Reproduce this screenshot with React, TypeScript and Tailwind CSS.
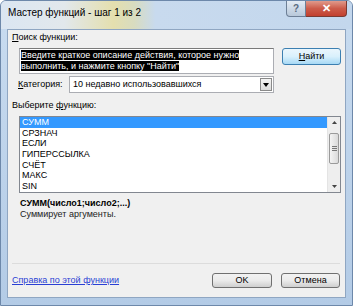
// Мастер функций (Excel, Windows 7 Aero dialog)

const functions = ['СУММ', 'СРЗНАЧ', 'ЕСЛИ', 'ГИПЕРССЫЛКА', 'СЧЁТ', 'МАКС', 'SIN']

function Btn({ label, w }: { label: React.ReactNode; w: string }) {
  return (
    <div
      className={`${w} h-[15px] flex items-center justify-center rounded-[3px] border border-[#707070] bg-gradient-to-b from-[#f2f2f2] via-[#ebebeb] to-[#cfcfcf] text-[9px] text-black leading-none`}
    >
      {label}
    </div>
  )
}

export default function App() {
  return (
    <div
      className="w-[353px] h-[306px] flex flex-col overflow-hidden rounded-t-[6px] border border-[#6d88aa] bg-gradient-to-b from-[#c9dcf0] to-[#b3cbe6]"
      style={{ fontFamily: '"Liberation Sans", Arial, sans-serif' }}
    >
      {/* Title bar */}
      <div className="h-[28px] flex items-start shrink-0 bg-[linear-gradient(to_right,#dbe6f2_0%,#e2e8ec_18%,#e4dfae_32%,#d8dcc0_38%,#c8daee_44%,#c3d7ed_100%)]">
        <div className="pl-[7px] pt-[6px] text-[10px] leading-[12px] text-black">
          Мастер функций - шаг 1 из 2
        </div>
        <div className="ml-auto mr-[5px] flex">
          <div className="w-[20px] h-[16px] flex items-center justify-center rounded-bl-[4px] border border-[#6d7f96] border-t-0 bg-gradient-to-b from-[#e3ebf4] to-[#b8c8da] text-[10px] font-bold text-[#5a6b80] leading-none">
            ?
          </div>
          <div className="w-[41px] h-[16px] flex items-center justify-center rounded-br-[4px] border border-[#7a3a32] border-t-0 border-l-0 bg-gradient-to-b from-[#e09a8c] via-[#cc5b4a] to-[#c2402e] text-[11px] font-bold text-white leading-none">
            ✕
          </div>
        </div>
      </div>

      {/* Client area */}
      <div className="mx-[6px] mb-[7px] h-[270px] flex flex-col bg-[#f0f0f0] border border-[#8fa6c2] text-black">
        <div className="pt-[2px] pl-[4px] text-[9px] leading-[11px]">
          <span className="underline">П</span>оиск функции:
        </div>

        {/* Search row */}
        <div className="mt-[5px] ml-[11px] flex items-start">
          <div className="w-[255px] h-[26px] bg-white border border-[#abadb3] border-t-[#7a7a7a] px-[1px] pt-[1px] text-[9px] leading-[11px]">
            <span className="bg-black text-white">
              Введите краткое описание действия, которое нужно
              <br />
              выполнить, и нажмите кнопку "Найти"
            </span>
          </div>
          <div className="ml-[8px]">
            <div className="w-[59px] h-[17px] flex items-center justify-center rounded-[3px] border border-[#3c7fb1] bg-gradient-to-b from-[#eaf6fd] via-[#d9f0fc] to-[#a7d9f5] text-[9px] leading-none">
              <span className="underline">Н</span>айти
            </div>
          </div>
        </div>

        {/* Category row */}
        <div className="mt-[2px] pl-[10px] flex items-center">
          <div className="w-[51px] text-[9px] leading-[11px]">
            <span className="underline">К</span>атегория:
          </div>
          <div className="w-[205px] h-[17px] flex items-center bg-white border border-[#abadb3]">
            <div className="flex-1 pl-[3px] text-[9px] leading-[11px]">10 недавно использовавшихся</div>
            <div className="w-[12px] h-[13px] mr-[1px] flex items-center justify-center border border-[#8a8a8a] bg-gradient-to-b from-[#f4f4f4] to-[#dcdcdc]">
              <svg width="6" height="4" viewBox="0 0 6 4">
                <path d="M0 0h6L3 4z" fill="#000" />
              </svg>
            </div>
          </div>
        </div>

        <div className="mt-[7px] pl-[4px] text-[9px] leading-[11px]">
          Выберите <span className="underline">ф</span>ункцию:
        </div>

        {/* Function list */}
        <div className="mt-[5px] ml-[11px] w-[322px] h-[77px] flex bg-white border border-[#828790]">
          <div className="flex-1">
            {functions.map((f, i) => (
              <div
                key={f}
                className={`h-[10.7px] pl-[2px] text-[9px] leading-[10.7px] ${i === 0 ? 'bg-[#3399ff] text-white' : ''}`}
              >
                {f}
              </div>
            ))}
          </div>
          <div className="w-[13px] flex flex-col bg-[#eeeeee] border-l border-[#e4e4e4]">
            <div className="h-[11px] flex items-center justify-center">
              <svg width="5" height="3" viewBox="0 0 5 3">
                <path d="M0 3h5L2.5 0z" fill="#444" />
              </svg>
            </div>
            <div className="mt-[5px] mx-[1px] h-[31px] flex flex-col items-center justify-center gap-[1px] rounded-[2px] border border-[#9a9a9a] bg-gradient-to-r from-[#f4f4f4] to-[#dadada]">
              <div className="w-[5px] h-px bg-[#777]" />
              <div className="w-[5px] h-px bg-[#777]" />
              <div className="w-[5px] h-px bg-[#777]" />
            </div>
            <div className="mt-auto h-[11px] flex items-center justify-center">
              <svg width="5" height="3" viewBox="0 0 5 3">
                <path d="M0 0h5L2.5 3z" fill="#444" />
              </svg>
            </div>
          </div>
        </div>

        <div className="mt-[5px] pl-[12px] text-[9px] leading-[11px] font-bold">СУММ(число1;число2;...)</div>
        <div className="pl-[12px] text-[9px] leading-[11px] text-[#222]">Суммирует аргументы.</div>

        {/* Separator */}
        <div className="mt-[43px] ml-[4px] mr-[5px] h-px bg-[#dcdcdc]" />

        {/* Footer */}
        <div className="pt-[9px] pl-[4px] pr-[5px] flex items-center">
          <div className="text-[9px] leading-[11px] text-[#2a3fd4] underline">Справка по этой функции</div>
          <div className="ml-auto flex gap-[9px]">
            <Btn label="OK" w="w-[60px]" />
            <Btn label="Отмена" w="w-[59px]" />
          </div>
        </div>
      </div>
    </div>
  )
}
